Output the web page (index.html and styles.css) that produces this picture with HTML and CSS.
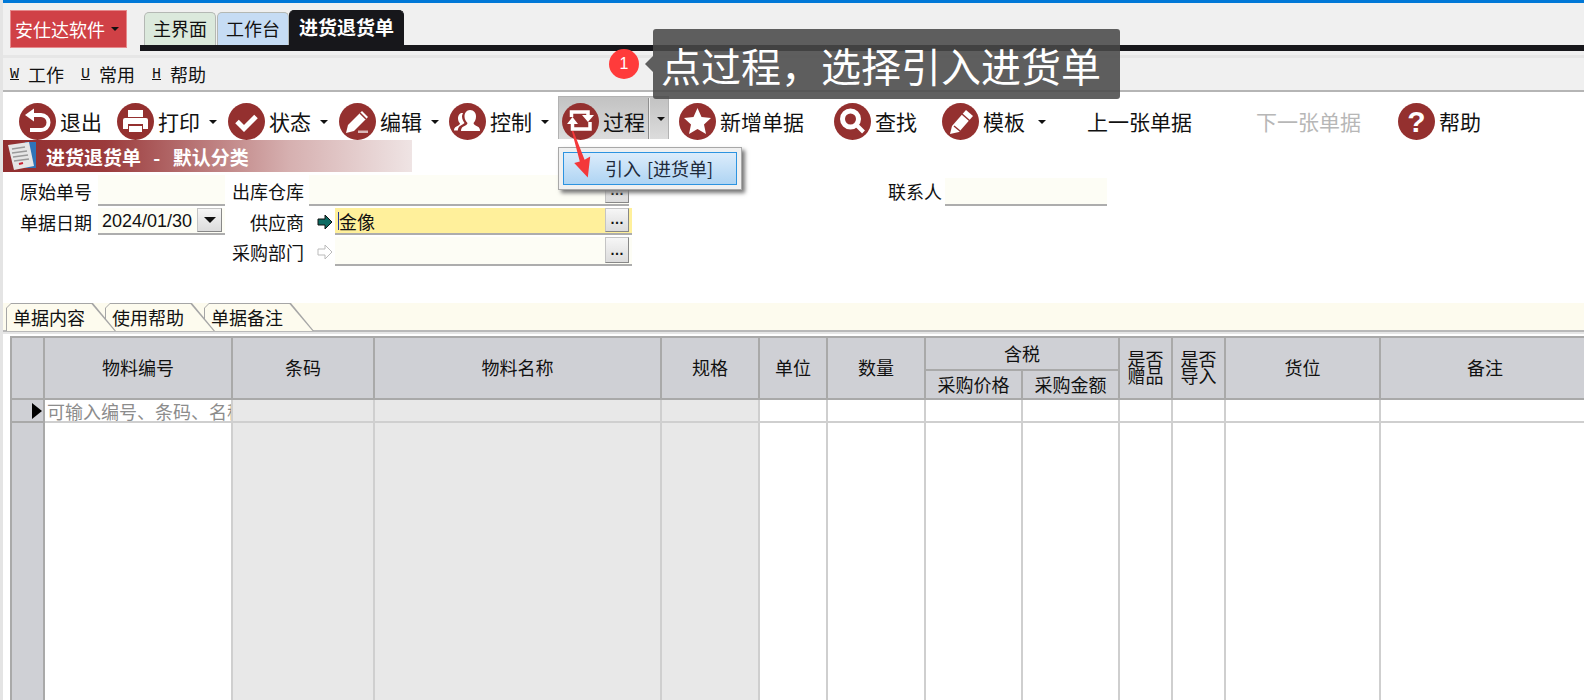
FILE: index.html
```
<!DOCTYPE html>
<html lang="zh">
<head>
<meta charset="utf-8">
<title>进货退货单</title>
<link rel="stylesheet" href="styles.css">
</head>
<body>
<div class="page">
  <header class="top">
    <div class="logo">安仕达软件<i class="caret caret-logo"></i></div>
    <div class="tabarea">
      <div class="tabs">
        <div class="ttab ttab-green">主界面</div>
        <div class="ttab ttab-blue">工作台</div>
        <div class="ttab ttab-black">进货退货单</div>
      </div>
      <div class="blackbar"></div>
    </div>
  </header>
  <nav class="menu">
    <span class="mi"><u>W</u>工作</span>
    <span class="mi"><u>U</u>常用</span>
    <span class="mi"><u>H</u>帮助</span>
  </nav>
  <div class="toolbar">
    <div class="tool">
      <svg class="ico" viewBox="0 0 37 37"><circle cx="18.500" cy="18.500" r="18.500"/><path class="st" d="M13 12h9a7.500 7.500 0 0 1 0 15H11"/><polygon class="fl" points="6,12 15,5.500 15,18.500"/></svg>
      <span>退出</span>
    </div>
    <div class="tool">
      <svg class="ico" viewBox="0 0 37 37"><circle cx="18.500" cy="18.500" r="18.500"/><rect class="fl" x="11" y="7" width="15" height="7"/><path class="fl" d="M8 15h21a2 2 0 0 1 2 2v9h-5v-5H11v5H6v-9a2 2 0 0 1 2-2z"/><rect class="fl" x="12" y="23" width="13" height="6"/></svg>
      <span>打印</span><i class="caret"></i>
    </div>
    <div class="tool">
      <svg class="ico" viewBox="0 0 37 37"><circle cx="18.500" cy="18.500" r="18.500"/><path class="st st-5" d="M9 18.500l7 7 12-12"/></svg>
      <span>状态</span><i class="caret"></i>
    </div>
    <div class="tool">
      <svg class="ico" viewBox="0 0 37 37"><circle cx="18.500" cy="18.500" r="18.500"/><polygon class="fl" points="7,30 9,22 23,8 29,14 15,28"/><path class="ln" d="M21 10l6 6"/><rect class="dim" x="19" y="27.500" width="10" height="2.500"/></svg>
      <span>编辑</span><i class="caret"></i>
    </div>
    <div class="tool">
      <svg class="ico" viewBox="0 0 37 37"><circle cx="18.500" cy="18.500" r="18.500"/><path class="fl" d="M21 7c4 0 6 3 6 6.500 0 3-1 5-2.500 6.500 0 1.500 2 2.500 4 3.500 2 1 2.500 2.500 2.500 4.500H12c0-2 .5-3.500 2.500-4.500s4-2 4-3.500C17 18.500 15.500 16.500 15.500 13.500 15.500 10 17.500 7 21 7z"/><path class="fl" d="M13 10c.5 0 1 .1 1 .2-.5 1-1 2-1 3.300 0 3 1.500 5 2.500 6.500-1 1-3 2-4.500 3-1.500 1-2 2.500-2.200 4.500H5c0-2 .5-3 2.500-4s3.500-2 3.500-3c-1-1-2-3-2-5 0-3 1.500-5.500 4-5.500z"/></svg>
      <span>控制</span><i class="caret"></i>
    </div>
    <div class="tool tool-active">
      <svg class="ico" viewBox="0 0 37 37"><circle cx="18.500" cy="18.500" r="18.500"/><path class="st st-3" d="M9.500 14V9H26v4"/><polygon class="fl" points="20,12 32,12 26,19"/><path class="st st-3" d="M28 19v7H10.500v-6"/><polygon class="fl" points="5,21 16,21 10.500,14"/></svg>
      <span>过程</span><i class="sep"></i><i class="caret caret-active"></i>
    </div>
    <div class="tool">
      <svg class="ico" viewBox="0 0 37 37"><circle cx="18.500" cy="18.500" r="18.500"/><polygon class="fl" points="18.500,5 22.500,14 32,15 25,21.500 27,31 18.500,26 10,31 12,21.500 5,15 14.500,14"/></svg>
      <span>新增单据</span>
    </div>
    <div class="tool">
      <svg class="ico" viewBox="0 0 37 37"><circle cx="18.500" cy="18.500" r="18.500"/><circle class="st st-5" cx="16.500" cy="16" r="8"/><path class="st" d="M23 22.500l6.500 6.500"/></svg>
      <span>查找</span>
    </div>
    <div class="tool">
      <svg class="ico" viewBox="0 0 37 37"><circle cx="18.500" cy="18.500" r="18.500"/><polygon class="fl" points="8,31 10,23 24,7 31,13 17,29"/><path class="ln" d="M20 11l8 7M12 23l6 5"/></svg>
      <span>模板</span><i class="caret caret-far"></i>
    </div>
    <div class="tool"><span>上一张单据</span></div>
    <div class="tool tool-off"><span>下一张单据</span></div>
    <div class="tool">
      <svg class="ico" viewBox="0 0 37 37"><circle cx="18.500" cy="18.500" r="18.500"/><text class="q" x="18.500" y="28.500">?</text></svg>
      <span>帮助</span>
    </div>
  </div>
  <div class="title">
    <svg class="docico" viewBox="0 0 32 30"><rect x="20" y="1" width="11" height="26" fill="#2f74b8"/><polygon points="3,4 24,1 29,25 9,29" fill="#e6e6e6"/><path d="M7 8l13-2M7 12l15-2M8 16l15-2M9 20l15-2" stroke="#9a9a9a" stroke-width="1.500"/><path d="M14 23l4-1" stroke="#c23" stroke-width="2"/></svg>
    <span>进货退货单 - 默认分类</span>
  </div>
  <form class="form">
    <label class="lb">原始单号</label>
    <div class="inp inp-short"></div>
    <label class="lb">出库仓库</label>
    <div class="inp inp-store"><b class="more">…</b></div>
    <label class="lb lb-contact">联系人</label>
    <div class="inp inp-contact"></div>

    <label class="lb">单据日期</label>
    <div class="inp inp-short inp-date">2024/01/30<b class="drop"><i class="caret"></i></b></div>
    <label class="lb lb-r">供应商</label>
    <svg class="arrow" viewBox="0 0 16 16"><polygon points="1,5 8,5 8,1 15,8 8,15 8,11 1,11" fill="#0d6a62" stroke="#111" stroke-width="1"/></svg>
    <div class="inp inp-yellow"><span class="cursor">金像</span><b class="more">…</b></div>

    <label class="lb lb-3">采购部门</label>
    <svg class="arrow" viewBox="0 0 16 16"><polygon points="1,5 8,5 8,1 15,8 8,15 8,11 1,11" fill="#fff" stroke="#bbb" stroke-width="1"/></svg>
    <div class="inp"><b class="more">…</b></div>
  </form>
  <div class="tabstrip">
    <div class="ptab ptab-1"><span>单据内容</span></div>
    <div class="ptab ptab-2"><span>使用帮助</span></div>
    <div class="ptab"><span>单据备注</span></div>
  </div>
  <div class="gridwrap">
    <table class="grid">
      <colgroup>
        <col class="c33"><col class="c188"><col class="c142"><col class="c287"><col class="c98"><col class="c68"><col class="c98"><col class="c97"><col class="c97"><col class="c53"><col class="c53"><col class="c155"><col>
      </colgroup>
      <thead>
        <tr class="h1">
          <th rowspan="2"></th><th rowspan="2">物料编号</th><th rowspan="2">条码</th><th rowspan="2">物料名称</th><th rowspan="2">规格</th><th rowspan="2">单位</th><th rowspan="2">数量</th>
          <th colspan="2">含税</th>
          <th rowspan="2" class="tight">是否赠品</th><th rowspan="2" class="tight">是否导入</th><th rowspan="2">货位</th><th rowspan="2">备注</th>
        </tr>
        <tr class="h2"><th>采购价格</th><th>采购金额</th></tr>
      </thead>
      <tbody>
        <tr class="r1">
          <td class="rh"><i class="rowmark"></i></td><td class="ph"><div class="clip">可输入编号、条码、名称</div></td><td class="g"></td><td class="g"></td><td class="g"></td><td></td><td></td><td></td><td></td><td></td><td></td><td></td><td></td>
        </tr>
        <tr class="r2">
          <td class="rh"></td><td></td><td class="g"></td><td class="g"></td><td class="g"></td><td></td><td></td><td></td><td></td><td></td><td></td><td></td><td></td>
        </tr>
      </tbody>
    </table>
  </div>
</div>
<div class="popmenu"><div class="popitem">引入 [进货单]</div></div>
<svg class="redarrow" viewBox="0 0 30 60"><polygon points="1,0 3,0 17,36 24,32 21,58 4,40 11,38" fill="#f4383a"/></svg>
<div class="badge">1</div>
<div class="tip">点过程，选择引入进货单</div>
</body>
</html>
```
FILE: styles.css
```
* { box-sizing: border-box; }
html, body { margin: 0; height: 700px; overflow: hidden; background: #fff; }
body { font-family: "Noto Sans CJK SC", "Liberation Sans", sans-serif; font-size: 18px; color: #111; }
.page { height: 700px; display: flex; flex-direction: column; overflow: hidden; border-left: 3px solid #e4e4e4; position: relative; }
i { display: block; }

.top { height: 55px; margin-left: -3px; flex: none; border-top: 3px solid #0078d7; background: #f0f0f0; display: flex; align-items: flex-start; padding: 7px 0 0 10px; }
.logo { width: 117px; height: 38px; background: #d04146; border: 1px solid #e58a8c; color: #fff; display: flex; align-items: center; padding-left: 4px; line-height: 1; }
.caret { width: 0; height: 0; border: 4px solid transparent; border-top: 4px solid #111; border-bottom: 0; margin-left: 8px; flex: none; }
.caret-logo { margin-left: 6px; }
.tabarea { flex: 1; margin-left: 13px; display: flex; flex-direction: column; }
.tabs { display: flex; padding-left: 4px; height: 35px; }
.ttab { height: 33px; margin-top: 2px; line-height: 31px; border: 1px solid #b4b8b4; border-bottom: 0; border-radius: 5px 5px 0 0; width: 72px; text-align: center; color: #111; white-space: nowrap; }
.ttab-green { background: #dbe9dc; margin-right: 1px; }
.ttab-blue { background: #c6dcf4; }
.ttab-black { height: 35px; margin-top: 0; width: 115px; background: #17171b; border-color: #17171b; color: #fff; font-weight: 700; font-size: 19px; }
.blackbar { height: 6px; background: #17171b; }

.menu { height: 37px; margin-left: -3px; flex: none; background: #f0f0f0; border-top: 3px solid #e6e6e6; border-bottom: 2px solid #b5b5b5; display: flex; align-items: center; padding-left: 10px; gap: 17px; }
.mi { display: flex; align-items: center; line-height: 1; }
.mi u { font: 15px/1 "Liberation Mono", monospace; width: 18px; }

.toolbar { height: 48px; flex: none; display: grid; grid-template-columns: 98px 111px 111px 110px 109px 121px 155px 108px 145px 169px 142px 1fr; padding-left: 16px; align-items: end; font-size: 21px; }
.tool { display: flex; align-items: center; height: 37px; line-height: 1; white-space: nowrap; }
.tool > span { margin-left: 4px; }
.tool > span:first-child { margin-left: 0; }
.tool .caret { margin-left: 9px; }
.tool .caret-far { margin-left: 13px; }
.tool-off { color: #b7b7b7; }
.ico { width: 37px; height: 37px; flex: none; fill: #94302f; }
.fl { fill: #fff; }
.dim { fill: #d9b8b8; }
.st { fill: none; stroke: #fff; stroke-width: 4; }
.st-3 { stroke-width: 3.500; }
.st-5 { stroke-width: 5; }
.ln { fill: none; stroke: #94302f; stroke-width: 1.500; }
.q { fill: #fff; font: 700 30px "Liberation Sans", sans-serif; text-anchor: middle; }
.tool-active { width: 111px; height: 43px; background: linear-gradient(#c2c2c2, #dcdcdc); padding: 6px 0 0 3px; border: 1px solid #b2b2b2; border-bottom: 0; margin-bottom: 1px; }
.sep { height: 41px; margin-top: -6px; background: #8f8f8f; margin-left: 3px; border-right: 1px solid #eee; width: 2px; }
.tool .caret-active { margin-left: 7px; margin-top: -4px; }

.title { height: 32px; width: 409px; flex: none; background: linear-gradient(90deg, #912e2f 0, #9b3b3c 25%, #d6b0b0 70%, #efe4e4 100%); display: flex; align-items: center; color: #fff; font-weight: 700; font-size: 19px; word-spacing: 8px; line-height: 1; padding-left: 2px; }
.docico { width: 32px; height: 30px; margin-right: 9px; flex: none; }

.form { height: 131px; flex: none; display: grid; grid-template-columns: 78px 134px 72px 31px 297px 256px 54px 3px 162px; grid-template-rows: 31px 27px 29px; row-gap: 2px; padding: 3px 0 0 17px; align-content: start; align-items: center; }
.lb { line-height: 1; white-space: nowrap; }
.lb-r { grid-column: 3; text-align: right; }
.lb-3 { grid-column: 3; }
.lb-contact { grid-column: 7; }
.arrow { width: 16px; height: 16px; margin-left: 13px; }
.inp { height: 100%; background: #fdfdf5; border-bottom: 2px solid #adadad; display: flex; align-items: center; position: relative; }
.inp-short { width: 127px; }
.inp-store { grid-column: 4 / 6; margin-left: 5px; margin-right: 3px; }
.inp-contact { grid-column: 9; height: 28px; align-self: end; }
.inp-date { font: 18px/1 "Liberation Sans", sans-serif; padding-left: 4px; }
.inp-yellow { background: #fff09b; }
.cursor { border-left: 1px solid #223a9c; margin-left: 3px; line-height: 1; }
.more, .drop { position: absolute; right: 3px; top: 0; bottom: 1px; width: 24px; background: linear-gradient(#f6f6f6, #dcdcdc); border: 1px solid #c4c4c4; border-right-color: #888; border-bottom-color: #888; display: flex; align-items: flex-end; justify-content: center; font: 700 14px/18px "Liberation Sans", sans-serif; color: #111; padding-bottom: 3px; }
.inp-store .more { right: 0; }
.drop { width: 25px; align-items: center; padding: 0; }
.drop .caret { margin: 0; border-width: 6px 6px 0; border-top-color: #111; border-style: solid; border-left-color: transparent; border-right-color: transparent; }

.tabstrip { height: 29px; flex: none; background: #fdfbee; display: flex; padding-left: 3px; border-bottom: 2px solid #b9b9b9; }
.ptab { position: relative; width: 123px; height: 28px; margin-right: -24px; flex: none; }
.ptab-1 { z-index: 3; }
.ptab-2 { z-index: 2; }
.ptab::before, .ptab::after { content: ""; position: absolute; inset: 0; }
.ptab::before { background: #a6a6a6; clip-path: polygon(5px 0, 87px 0, 110px 100%, 0 100%, 0 5px); }
.ptab::after { inset: 1px 0 0 1px; background: #fdfbee; clip-path: polygon(4px 0, 84.500px 0, 107.500px 100%, 0 100%, 0 4px); }
.ptab span { position: relative; z-index: 1; padding-left: 7px; display: block; line-height: 29px; }

.gridwrap { flex: 1; min-height: 0; padding: 4px 0 0 7px; overflow: hidden; background: linear-gradient(#e6e6e6 2px, #fff 2px); }
.grid { width: 1581px; table-layout: fixed; border-collapse: collapse; }
.c33 { width: 33px; } .c188 { width: 188px; } .c142 { width: 142px; } .c287 { width: 287px; } .c98 { width: 98px; } .c68 { width: 68px; } .c97 { width: 97px; } .c53 { width: 53px; } .c155 { width: 155px; }
.grid th { background: #cfd0d5; border: 2px solid #a9a9a9; font-weight: 400; padding: 0 0 2px; line-height: 1; color: #111; }
.h1 { height: 33px; } .h2 { height: 29px; }
.grid th.tight { line-height: 17px; padding: 0 6px 2px; }
.grid td { border: 2px solid #cfcfcf; padding: 0; }
.r1 { height: 23px; } .r2 { height: 300px; }
.grid td.rh { background: #cfd0d5; border-color: #a9a9a9; vertical-align: middle; }
.rowmark { width: 0; height: 0; border: 8px solid transparent; border-left: 10px solid #000; border-right: 0; margin-left: 20px; }
.g { background: #e8e8e8; }
.ph { color: #8c8c8c; }
.clip { overflow: hidden; white-space: nowrap; line-height: 20px; height: 20px; padding-left: 2px; }

.popmenu { position: absolute; left: 558px; top: 147px; width: 184px; height: 43px; background: #f0f0f0; border: 1px solid #a8a8a8; box-shadow: 3px 3px 4px #777; padding: 4px; }
.popitem { height: 100%; border: 1px solid #2c93e0; background: linear-gradient(#dcecfb, #aed4f3); text-align: center; line-height: 31px; color: #1d2a3a; padding-left: 18px; word-spacing: 2px; }
.redarrow { position: absolute; left: 571px; top: 131px; width: 24px; height: 48px; }
.badge { position: absolute; left: 609px; top: 49px; width: 30px; height: 30px; border-radius: 50%; background: #ff3b3b; color: #fff; font: 16px/30px "Liberation Sans", sans-serif; text-align: center; }
.tip { position: absolute; left: 653px; top: 29px; width: 467px; height: 70px; background: rgba(72, 72, 72, .87); color: #fff; border-radius: 3px; font-size: 40px; line-height: 72px; padding-left: 8px; white-space: nowrap; }
.tip::before { content: ""; position: absolute; left: -8px; top: 27px; border: 8px solid transparent; border-right-color: rgba(72, 72, 72, .87); border-left: 0; }
```
